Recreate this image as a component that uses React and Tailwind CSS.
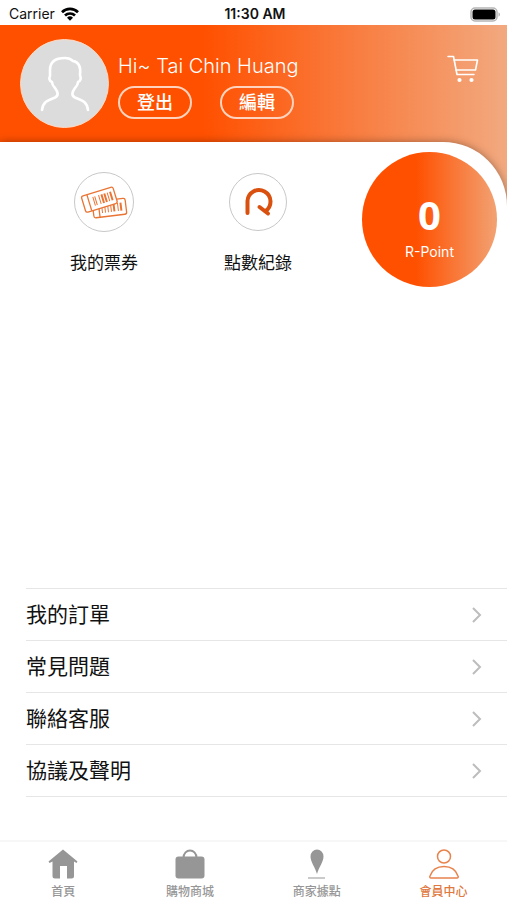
import React, { useState } from 'react';

const menuItems = ['我的訂單', '常見問題', '聯絡客服', '協議及聲明'];

const WifiIcon = () => (
  <svg width="18" height="14" viewBox="0 0 18 14" fill="none" stroke="#000" strokeWidth="2.7">
    <path d="M1 5.2a11.5 11.5 0 0 1 16 0" />
    <path d="M4 8.5a7.2 7.2 0 0 1 10 0" />
    <path d="M9 13.8 6 10.8a4.3 4.3 0 0 1 6 0z" fill="#000" stroke="none" />
  </svg>
);

const BatteryIcon = () => (
  <svg width="31" height="15" viewBox="0 0 31 15">
    <rect x="1" y="1" width="26" height="13" rx="4" fill="#fff" stroke="#b5b5b5" strokeWidth="1.5" />
    <rect x="2.5" y="2.5" width="23" height="10" rx="2.5" fill="#000" />
    <path d="M28.5 5.3c2 .8 2 3.6 0 4.4z" fill="#b5b5b5" />
  </svg>
);

const AvatarIcon = () => (
  <svg width="88" height="88" viewBox="0 0 88 88" fill="none" stroke="#fff" strokeWidth="2.6" strokeLinecap="round" strokeLinejoin="round">
    <path d="M21 70C22 61 28 60 34 57.500C38 55.500 37 52 34 48C32 46 31 45 31 42C28 41 28 38 29 36V30C29 21 36 18 44 18C48 18 50 19 52 21C58 22 60 27 59 35C60 38 60 41 57 42C57 45 56 46 54 48C51 52 50 55.500 54 57.500C60 60 66 61 67 70" />
  </svg>
);

const CartIcon = () => (
  <svg width="32" height="28" viewBox="0 0 32 28" fill="none" stroke="#fff" strokeWidth="1.6" strokeLinejoin="round" strokeLinecap="round">
    <path d="M1 1.500h5.500l3.500 18h17" />
    <path d="M7 5h23.500l-2 10H9" />
    <circle cx="12.5" cy="25" r="2.1" fill="#fff" stroke="none" />
    <circle cx="24.5" cy="25" r="2.1" fill="#fff" stroke="none" />
  </svg>
);

const TicketIcon = () => (
  <svg width="58" height="58" viewBox="0 0 58 58" fill="none" stroke="#ea7434" strokeWidth="1.3" strokeLinejoin="round">
    <g transform="rotate(-7 35 35)">
      <rect x="18" y="27" width="33" height="16" rx="2" />
      <path d="M24 27v16" />
      <path d="M27 31v8M30 31v8M33 31v8M36 31v8M43 31v8" strokeWidth="1" />
      <path d="M39 31v8M46 31v8" strokeWidth="2" />
    </g>
    <g transform="rotate(-17 25 27)">
      <rect x="8" y="18" width="33" height="17" rx="2" fill="#fff" />
      <path d="M14 18v17" />
      <path d="M19 22v9M21 22v9M25 22v9M34 22v9" strokeWidth="1" />
      <path d="M28 22v9M31 22v9M37 22v9" strokeWidth="2" />
    </g>
  </svg>
);

const PointIcon = () => (
  <svg width="56" height="56" viewBox="0 0 56 56" fill="none" stroke="#d9500f" strokeWidth="4" strokeLinecap="round" strokeLinejoin="round">
    <path d="M17.5 39V27a11.500 11.500 0 1 1 18 10" />
    <path d="M29.500 33 38 39.500" />
  </svg>
);

const ChevronIcon = () => (
  <svg width="10" height="16" viewBox="0 0 10 16" fill="none" stroke="#bdbdbd" strokeWidth="2">
    <path d="M1 1l7 7-7 7" />
  </svg>
);

const HomeIcon = () => (
  <svg width="30" height="30" viewBox="0 0 30 30" fill="#969696">
    <path d="M15 .5 29.5 12.5 28.5 14 26 12.500V27a2.500 2.500 0 0 1-2.500 2.500H19V17h-7v12.500H7A2.500 2.500 0 0 1 4.500 27V12.500L1.500 14 .5 12.500z" />
  </svg>
);

const BagIcon = () => (
  <svg width="30" height="30" viewBox="0 0 30 30">
    <path d="M8.500 9C8.500-1 21.500-1 21.500 9" fill="none" stroke="#969696" strokeWidth="2" />
    <rect x="0.5" y="7.5" width="29" height="22" rx="3" fill="#969696" />
  </svg>
);

const PinIcon = () => (
  <svg width="30" height="30" viewBox="0 0 30 30">
    <path d="M15 25C13 18 8.500 13 8.500 7.500a6.500 7 0 0 1 13 0C21.500 13 17 18 15 25z" fill="#969696" />
    <path d="M6 29h17" stroke="#b8b8b8" strokeWidth="1.5" />
  </svg>
);

const MemberIcon = () => (
  <svg width="30" height="30" viewBox="0 0 30 30" fill="none" stroke="#e8834c" strokeWidth="1.5" strokeLinejoin="round">
    <circle cx="15" cy="7.5" r="6.5" />
    <path d="M2 29c-1 0-1.500-1-1-2 2-6 7-9.500 14-9.500S27 21 29 27c.5 1 0 2-1 2z" />
  </svg>
);

const tabs = [
  { label: '首頁', Icon: HomeIcon },
  { label: '購物商城', Icon: BagIcon },
  { label: '商家據點', Icon: PinIcon },
  { label: '會員中心', Icon: MemberIcon },
];

const App = () => {
  const [active, setActive] = useState('會員中心');

  return (
    <div className="flex min-h-screen flex-col bg-white font-['Inter','Noto_Sans_CJK_TC',sans-serif] text-[#111111]">
      <div className="grid h-[25px] grid-cols-3 items-center pl-[9px] pr-[6px] pt-[3px] text-sm leading-5">
        <div className="flex items-center gap-[6px]">
          <span>Carrier</span>
          <WifiIcon />
        </div>
        <div className="text-center font-semibold">11:30 AM</div>
        <div className="flex justify-end">
          <BatteryIcon />
        </div>
      </div>

      <div className="flex flex-1 flex-col overflow-hidden bg-linear-to-r/srgb from-[#ff5000] from-40% to-[#f2a97f]">
        <header className="flex h-[117px] items-start pl-[20px] pr-[28px] pt-[14px] text-white">
          <div className="h-[89px] w-[89px] shrink-0 overflow-hidden rounded-full border border-[#ffd9c4] bg-[#dcdcdc]">
            <AvatarIcon />
          </div>
          <div className="ml-[9px] flex-1 pt-[15px]">
            <h1 className="text-xl font-light leading-6">Hi~ Tai Chin Huang</h1>
            <div className="mt-2 flex gap-[28px]">
              <button className="flex h-[33px] w-[74px] items-center justify-center rounded-full border-2 border-[#ffd3bd] text-lg font-medium leading-6">登出</button>
              <button className="flex h-[33px] w-[74px] items-center justify-center rounded-full border-2 border-[#ffd3bd] text-lg font-medium leading-6">編輯</button>
            </div>
          </div>
          <button aria-label="購物車" className="mt-[16px]">
            <CartIcon />
          </button>
        </header>

        <main className="flex flex-1 flex-col rounded-tr-[64px] bg-white shadow-[0_0_8px_rgba(0,0,0,0.35)]">
          <div className="flex pr-[10px] pt-[10px]">
            <div className="grid flex-1 grid-cols-2 px-[27px] pt-[20px] text-[17px] leading-6">
              <button className="flex flex-col items-center gap-[19px]">
                <span className="rounded-full border border-[#c8c8c8]">
                  <TicketIcon />
                </span>
                我的票券
              </button>
              <button className="flex flex-col items-center gap-[19px]">
                <span className="flex h-[60px] items-center">
                  <span className="rounded-full border border-[#c8c8c8]">
                    <PointIcon />
                  </span>
                </span>
                點數紀錄
              </button>
            </div>
            <div className="flex h-[135px] w-[135px] flex-col items-center rounded-full bg-linear-to-r/srgb from-[#ff5000] from-40% to-[#f2a273] pt-[40px] text-white">
              <span className="font-['Noto_Sans',sans-serif] text-[40px] font-bold leading-[46px]">0</span>
              <span className="mt-1 text-sm leading-5">R-Point</span>
            </div>
          </div>

          <ul className="mb-[43px] ml-[26px] mt-auto border-t border-[#e6e6e6]">
            {menuItems.map((item) => (
              <li key={item}>
                <a href="#" className="flex h-[52px] items-center justify-between border-b border-[#e6e6e6] pr-[25px] pt-px text-[21px] leading-8">
                  {item}
                  <ChevronIcon />
                </a>
              </li>
            ))}
          </ul>
        </main>
      </div>

      <nav className="grid h-[60px] grid-cols-4 border-t-2 border-[#f7f7f7] bg-white">
        {tabs.map(({ label, Icon }) => (
          <button
            key={label}
            onClick={() => setActive(label)}
            className={
              active === label
                ? 'flex flex-col items-center pt-[7px] text-xs font-medium leading-4 text-[#e07840]'
                : 'flex flex-col items-center pt-[7px] text-xs font-medium leading-4 text-[#969696]'
            }
          >
            <Icon />
            <span className="mt-[5px]">{label}</span>
          </button>
        ))}
      </nav>
    </div>
  );
};

export default App;
